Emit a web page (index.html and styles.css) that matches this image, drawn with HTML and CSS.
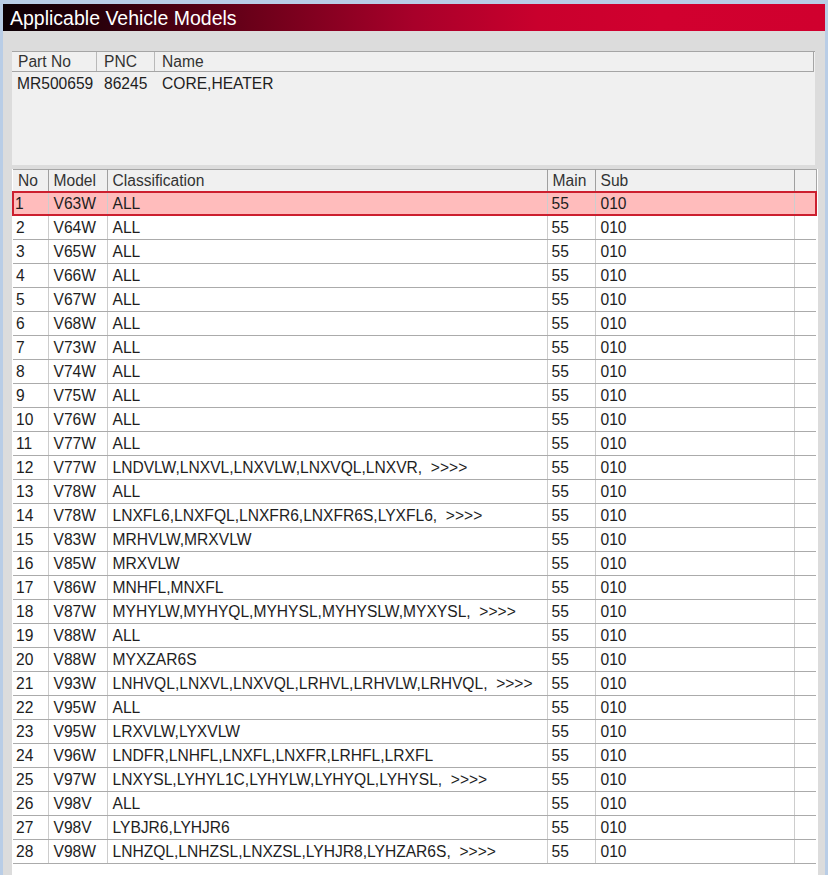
FILE: index.html
```html
<!DOCTYPE html>
<html>
<head>
<meta charset="utf-8">
<link rel="stylesheet" href="styles.css">
</head>
<body>
<div class="window">
  <div class="titlebar">Applicable Vehicle Models</div>
  <div class="content">
    <div class="parts">
      <div class="prow phead">
        <div class="pc c-part">Part No</div>
        <div class="pc c-pnc">PNC</div>
        <div class="pc c-name">Name</div>
      </div>
      <div class="prow pdata">
        <div class="pc c-part">MR500659</div>
        <div class="pc c-pnc">86245</div>
        <div class="pc c-name">CORE,HEATER</div>
      </div>
    </div>
    <div class="models">
      <table class="grid">
        <colgroup>
          <col class="w-no"><col class="w-model"><col class="w-class"><col class="w-main"><col class="w-sub"><col class="w-x">
        </colgroup>
        <thead>
          <tr><th>No</th><th>Model</th><th>Classification</th><th>Main</th><th>Sub</th><th></th></tr>
        </thead>
        <tbody>
          <tr class="sel"><td>1</td><td>V63W</td><td>ALL</td><td>55</td><td>010</td><td></td></tr>
          <tr><td>2</td><td>V64W</td><td>ALL</td><td>55</td><td>010</td><td></td></tr>
          <tr><td>3</td><td>V65W</td><td>ALL</td><td>55</td><td>010</td><td></td></tr>
          <tr><td>4</td><td>V66W</td><td>ALL</td><td>55</td><td>010</td><td></td></tr>
          <tr><td>5</td><td>V67W</td><td>ALL</td><td>55</td><td>010</td><td></td></tr>
          <tr><td>6</td><td>V68W</td><td>ALL</td><td>55</td><td>010</td><td></td></tr>
          <tr><td>7</td><td>V73W</td><td>ALL</td><td>55</td><td>010</td><td></td></tr>
          <tr><td>8</td><td>V74W</td><td>ALL</td><td>55</td><td>010</td><td></td></tr>
          <tr><td>9</td><td>V75W</td><td>ALL</td><td>55</td><td>010</td><td></td></tr>
          <tr><td>10</td><td>V76W</td><td>ALL</td><td>55</td><td>010</td><td></td></tr>
          <tr><td>11</td><td>V77W</td><td>ALL</td><td>55</td><td>010</td><td></td></tr>
          <tr><td>12</td><td>V77W</td><td>LNDVLW,LNXVL,LNXVLW,LNXVQL,LNXVR,&nbsp; &gt;&gt;&gt;&gt;</td><td>55</td><td>010</td><td></td></tr>
          <tr><td>13</td><td>V78W</td><td>ALL</td><td>55</td><td>010</td><td></td></tr>
          <tr><td>14</td><td>V78W</td><td>LNXFL6,LNXFQL,LNXFR6,LNXFR6S,LYXFL6,&nbsp; &gt;&gt;&gt;&gt;</td><td>55</td><td>010</td><td></td></tr>
          <tr><td>15</td><td>V83W</td><td>MRHVLW,MRXVLW</td><td>55</td><td>010</td><td></td></tr>
          <tr><td>16</td><td>V85W</td><td>MRXVLW</td><td>55</td><td>010</td><td></td></tr>
          <tr><td>17</td><td>V86W</td><td>MNHFL,MNXFL</td><td>55</td><td>010</td><td></td></tr>
          <tr><td>18</td><td>V87W</td><td>MYHYLW,MYHYQL,MYHYSL,MYHYSLW,MYXYSL,&nbsp; &gt;&gt;&gt;&gt;</td><td>55</td><td>010</td><td></td></tr>
          <tr><td>19</td><td>V88W</td><td>ALL</td><td>55</td><td>010</td><td></td></tr>
          <tr><td>20</td><td>V88W</td><td>MYXZAR6S</td><td>55</td><td>010</td><td></td></tr>
          <tr><td>21</td><td>V93W</td><td>LNHVQL,LNXVL,LNXVQL,LRHVL,LRHVLW,LRHVQL,&nbsp; &gt;&gt;&gt;&gt;</td><td>55</td><td>010</td><td></td></tr>
          <tr><td>22</td><td>V95W</td><td>ALL</td><td>55</td><td>010</td><td></td></tr>
          <tr><td>23</td><td>V95W</td><td>LRXVLW,LYXVLW</td><td>55</td><td>010</td><td></td></tr>
          <tr><td>24</td><td>V96W</td><td>LNDFR,LNHFL,LNXFL,LNXFR,LRHFL,LRXFL</td><td>55</td><td>010</td><td></td></tr>
          <tr><td>25</td><td>V97W</td><td>LNXYSL,LYHYL1C,LYHYLW,LYHYQL,LYHYSL,&nbsp; &gt;&gt;&gt;&gt;</td><td>55</td><td>010</td><td></td></tr>
          <tr><td>26</td><td>V98V</td><td>ALL</td><td>55</td><td>010</td><td></td></tr>
          <tr><td>27</td><td>V98V</td><td>LYBJR6,LYHJR6</td><td>55</td><td>010</td><td></td></tr>
          <tr><td>28</td><td>V98W</td><td>LNHZQL,LNHZSL,LNXZSL,LYHJR8,LYHZAR6S,&nbsp; &gt;&gt;&gt;&gt;</td><td>55</td><td>010</td><td></td></tr>
        </tbody>
      </table>
    </div>
  </div>
</div>
</body>
</html>
```
FILE: styles.css
```css
html, body {
  margin: 0;
  padding: 0;
}
body {
  background: #b9cde6;
  font-family: "Liberation Sans", Arial, sans-serif;
  color: #1e1e1e;
  width: 828px;
  height: 875px;
  overflow: hidden;
}
.window {
  margin: 4px 0 0 3px;
  width: 822px;
  height: 871px;
  background: #dcdcdc;
  display: flex;
  flex-direction: column;
}
.titlebar {
  height: 27px;
  line-height: 28px;
  padding-left: 7px;
  color: #ffffff;
  font-size: 19.5px;
  background: linear-gradient(to right, #0b0005 0%, #2a000b 12%, #6a0019 30%, #a8002a 50%, #c9002d 65%, #d1002f 80%, #d0002e 100%);
}
.content {
  flex: 1;
  padding: 20px 7px 0 9px;
  display: flex;
  flex-direction: column;
  gap: 4px;
}
.parts {
  width: 803px;
  height: 114px;
  background: #f0f0f0;
  border-top: 1px solid #a5a5a5;
  box-sizing: border-box;
}
.prow {
  display: flex;
  font-size: 15.6px;
}
.phead {
  height: 20px;
  line-height: 20px;
  border-bottom: 1px solid #a5a5a5;
  border-right: 1px solid #a5a5a5;
  width: 802px;
  box-sizing: border-box;
}
.phead .pc {
  border-right: 1px solid #b9b9b9;
  padding-left: 7px;
  color: #333;
}
.phead .c-part { padding-left: 6px; }
.phead .c-name { border-right: none; }
.pdata {
  height: 24px;
  line-height: 24px;
}
.pdata .pc { padding-left: 7px; }
.pdata .c-part { padding-left: 5px; }
.pc { box-sizing: border-box; white-space: nowrap; }
.c-part { width: 85px; }
.c-pnc { width: 58px; }
.c-name { flex: 1; }

.models {
  width: 806px;
  flex: 1;
  background: #ffffff;
}
.grid {
  border-collapse: collapse;
  table-layout: fixed;
  width: 803px;
  font-size: 15.6px;
}
.w-no { width: 35px; }
.w-model { width: 59px; }
.w-class { width: 440px; }
.w-main { width: 48px; }
.w-sub { width: 199px; }
.w-x { width: 22px; }
.grid th {
  height: 22px;
  background: #f0f0f0;
  font-weight: normal;
  text-align: left;
  padding: 1px 0 0 5px;
  color: #333;
  border-top: 1px solid #a5a5a5;
  border-bottom: 1px solid #a5a5a5;
  border-right: 1px solid #a0a0a0;
  white-space: nowrap;
  box-sizing: border-box;
  line-height: 20px;
}
.grid th:first-child { padding-left: 5px; }
.grid td {
  height: 23px;
  padding: 1px 0 0 5px;
  border-bottom: 1px solid #ababab;
  border-right: 1px solid #cdcdcd;
  white-space: nowrap;
  overflow: hidden;
  line-height: 22px;
  box-sizing: border-box;
}
.grid td:first-child { padding-left: 3px; }
.grid td:nth-child(4) { padding-left: 4px; }
.grid td:last-child { border-right: none; }
.grid th:last-child { border-right: 1px solid #a5a5a5; }
.grid tr.sel td {
  background: #ffbcbc;
  border-top: 2px solid #cc1f2f;
  border-bottom: 2px solid #cc1f2f;
  height: 23px;
  line-height: 20px;
  padding-top: 0;
}
.grid tr.sel td:first-child { border-left: 2px solid #cc1f2f; padding-left: 1px; }
.grid tr.sel td:last-child { border-right: 2px solid #cc1f2f; }
```
